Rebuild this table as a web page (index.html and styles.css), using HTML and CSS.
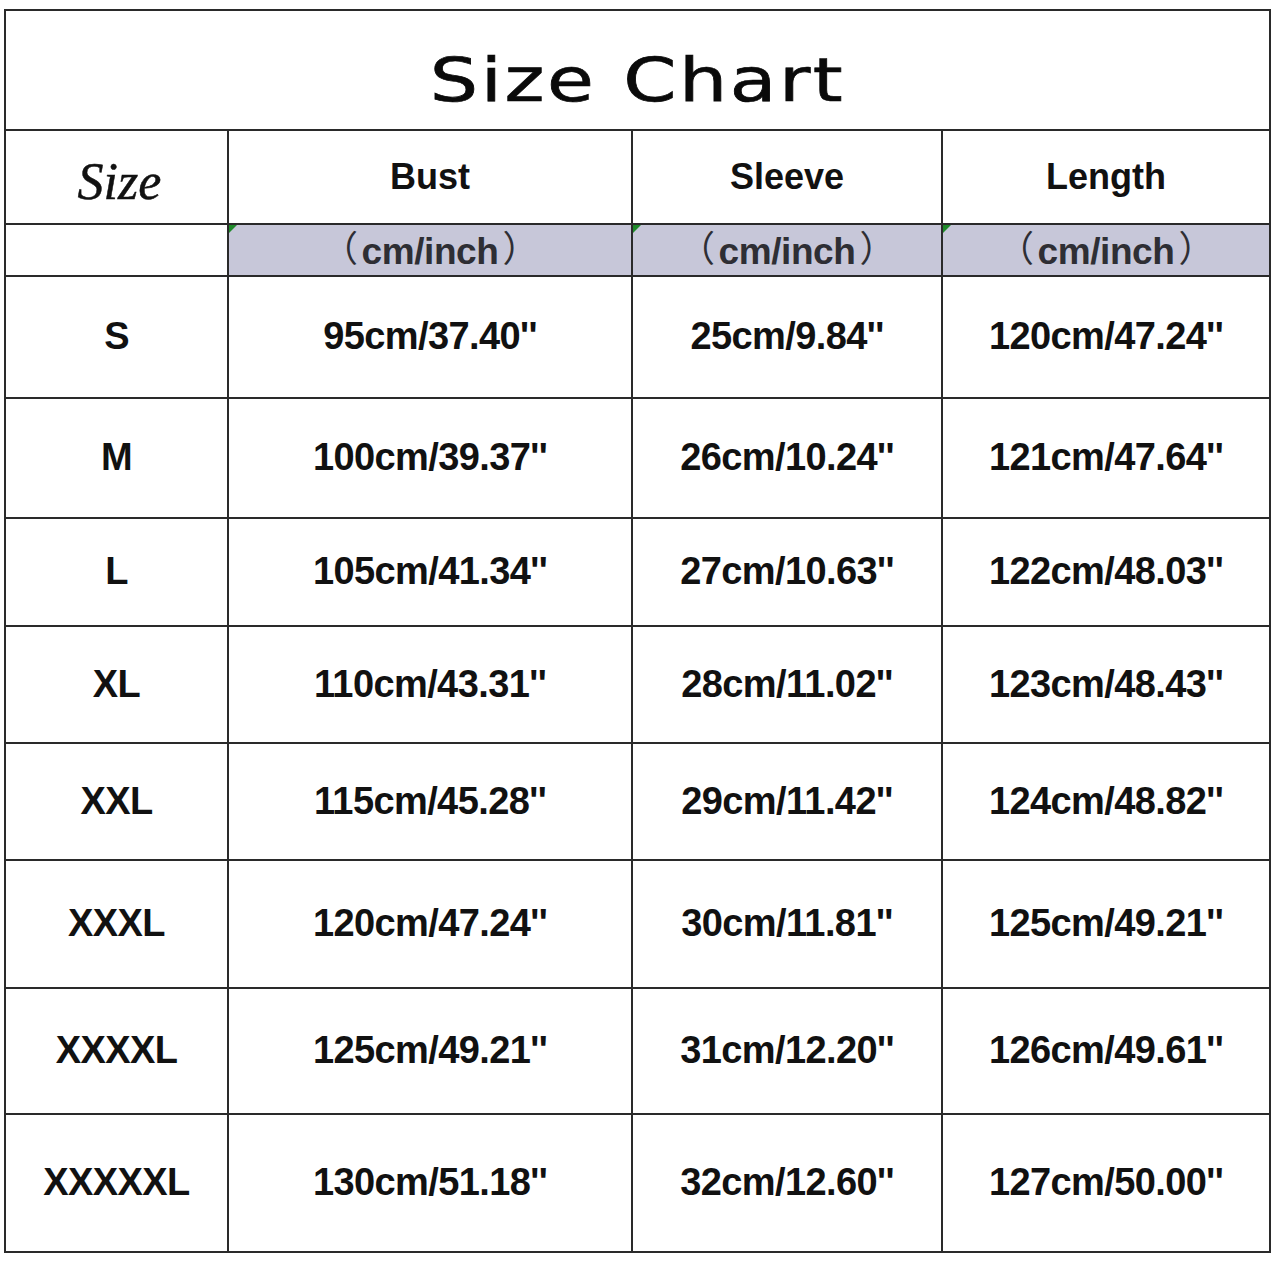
FILE: index.html
```html
<!DOCTYPE html>
<html>
<head>
<meta charset="utf-8">
<link rel="stylesheet" href="styles.css">
</head>
<body>
<table class="chart">
  <colgroup>
    <col class="c-size"><col class="c-bust"><col class="c-sleeve"><col class="c-length">
  </colgroup>
  <tr class="r-title"><td colspan="4" class="title"><span>Size Chart</span></td></tr>
  <tr class="r-head">
    <td class="size-head"><span>Size</span></td>
    <td class="head">Bust</td>
    <td class="head">Sleeve</td>
    <td class="head">Length</td>
  </tr>
  <tr class="r-unit">
    <td></td>
    <td class="unit"><i class="mark"></i><span class="par open">（</span>cm/inch<span class="par close">）</span></td>
    <td class="unit"><i class="mark"></i><span class="par open">（</span>cm/inch<span class="par close">）</span></td>
    <td class="unit"><i class="mark"></i><span class="par open">（</span>cm/inch<span class="par close">）</span></td>
  </tr>
  <tr class="r-s"><td>S</td><td>95cm/37.40''</td><td>25cm/9.84''</td><td>120cm/47.24''</td></tr>
  <tr class="r-m"><td>M</td><td>100cm/39.37''</td><td>26cm/10.24''</td><td>121cm/47.64''</td></tr>
  <tr class="r-l"><td>L</td><td>105cm/41.34''</td><td>27cm/10.63''</td><td>122cm/48.03''</td></tr>
  <tr class="r-xl"><td>XL</td><td>110cm/43.31''</td><td>28cm/11.02''</td><td>123cm/48.43''</td></tr>
  <tr class="r-xxl"><td>XXL</td><td>115cm/45.28''</td><td>29cm/11.42''</td><td>124cm/48.82''</td></tr>
  <tr class="r-3xl"><td>XXXL</td><td>120cm/47.24''</td><td>30cm/11.81''</td><td>125cm/49.21''</td></tr>
  <tr class="r-4xl"><td>XXXXL</td><td>125cm/49.21''</td><td>31cm/12.20''</td><td>126cm/49.61''</td></tr>
  <tr class="r-5xl"><td>XXXXXL</td><td>130cm/51.18''</td><td>32cm/12.60''</td><td>127cm/50.00''</td></tr>
</table>
</body>
</html>
```
FILE: styles.css
```css
html, body {
  margin: 0;
  padding: 0;
  background: #fff;
}
body {
  padding: 9px 0 0 4px;
}
.chart {
  border-collapse: collapse;
  table-layout: fixed;
  width: 1267px;
  font-family: "Liberation Sans", Arial, sans-serif;
  font-weight: bold;
  color: #111;
}
.c-size { width: 223px; }
.c-bust { width: 404px; }
.c-sleeve { width: 310px; }
.c-length { width: 328px; }
.chart td {
  border: 2px solid #2a2a2a;
  padding: 0;
  text-align: center;
  vertical-align: middle;
  font-size: 38px;
  line-height: 1.15;
  letter-spacing: -0.6px;
}
.r-title td { height: 118px; }
.r-head td { height: 92px; }
.r-unit td { height: 50px; }
.r-s td { height: 120px; }
.r-m td { height: 118px; }
.r-l td { height: 106px; }
.r-xl td { height: 115px; }
.r-xxl td { height: 115px; }
.r-3xl td { height: 126px; }
.r-4xl td { height: 124px; }
.r-5xl td { height: 136px; }

.title span {
  display: inline-block;
  font-family: "DejaVu Sans", sans-serif;
  font-weight: normal;
  font-size: 60px;
  letter-spacing: 2px;
  color: #0a0a0a;
  transform: scaleX(1.27);
  position: relative;
  top: 10px;
  -webkit-text-stroke: 0.7px #0a0a0a;
}
.chart td.size-head {
  font-family: "Liberation Serif", serif;
  font-style: italic;
  font-weight: normal;
  font-size: 52px;
  line-height: 1;
  letter-spacing: 0;
  -webkit-text-stroke: 0.5px #111;
}
.size-head span {
  position: relative;
  top: 5px;
  left: 3px;
}
.chart td.head {
  font-size: 36px;
  line-height: 1;
  letter-spacing: 0;
}
.chart td.unit {
  position: relative;
  background: #c7c7d9;
  color: #2e2e34;
  font-family: "Liberation Sans", "Noto Sans CJK SC", sans-serif;
  font-size: 37px;
  line-height: 1;
  letter-spacing: -0.4px;
}
.par {
  font-family: "Noto Sans CJK SC", sans-serif;
  font-weight: normal;
  font-size: 36px;
  display: inline-block;
  position: relative;
  top: -2px;
}
.par.open {
  margin-right: 4px;
}
.par.close {
  margin-left: 4px;
}
.mark {
  position: absolute;
  left: 0;
  top: 0;
  width: 0;
  height: 0;
  border-top: 8px solid #1f8a2a;
  border-right: 8px solid transparent;
}
```
